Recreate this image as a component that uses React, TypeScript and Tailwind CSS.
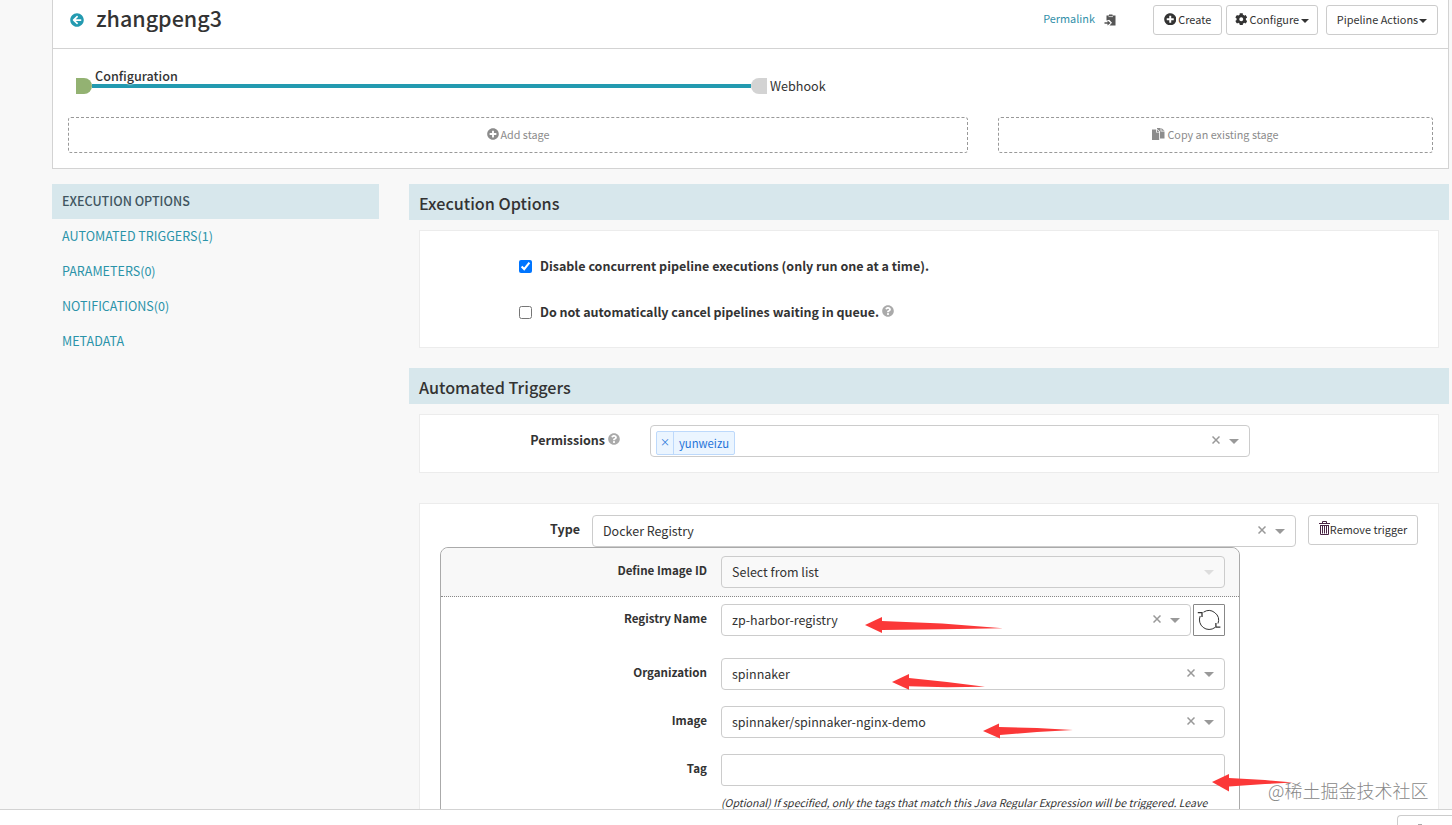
import { useState } from 'react';
import type { ReactNode } from 'react';
import { FaArrowCircleLeft, FaCog, FaPlusCircle, FaQuestionCircle } from 'react-icons/fa';

const navItems = [
  { key: 'concurrent', label: 'EXECUTION OPTIONS' },
  { key: 'triggers', label: 'AUTOMATED TRIGGERS', count: 1 },
  { key: 'parameters', label: 'PARAMETERS', count: 0 },
  { key: 'notifications', label: 'NOTIFICATIONS', count: 0 },
  { key: 'metadata', label: 'METADATA' },
];

function Caret() {
  return (
    <svg width="8" height="4" viewBox="0 0 8 4" className="mt-[3px] shrink-0" fill="currentColor">
      <path d="M0 0h8L4 4z" />
    </svg>
  );
}

function ClipboardIcon() {
  return (
    <svg width="12" height="12" viewBox="0 0 12 12" className="text-[#555]">
      <path d="M2.500 1.500H5V.5h3.500v1H11.500V11.500H5.500L8 8.800 5.200 5.800 2.500 6.500z" fill="currentColor" />
      <path d="M4.500 2.600h4.500" stroke="#fff" strokeWidth="0.700" />
      <path d="M0.500 8.300H3.500V6.500l3.100 2.500-3.100 2.500V9.700H0.500z" fill="currentColor" />
    </svg>
  );
}

function CopyIcon() {
  return (
    <svg width="13" height="12" viewBox="0 0 13 12" fill="currentColor">
      <path d="M0 1.500h4v3h3.200V12H0z" />
      <path d="M4.800 1.600 7.400 4h-2.600z" />
      <path d="M5 0h3.600v3.400h3.900V10.500H8V3.600L5 1z" />
      <path d="M9.400 0l3.100 2.700H9.400z" />
    </svg>
  );
}

function TrashIcon() {
  return (
    <svg width="11" height="14" viewBox="0 0 11 14" className="-mt-[2px] shrink-0" fill="none" stroke="#4a2545" strokeWidth="1">
      <path d="M0 2.500h11M3.500 2.500v-2h4v2M1.500 4v9.500h8V4M3.500 4.500v8M5.500 4.500v8M7.500 4.500v8M1 4.500h9" />
    </svg>
  );
}

function RefreshIcon() {
  return (
    <svg width="24" height="22" viewBox="0 0 24 22" className="shrink-0" fill="none" stroke="#333">
      <path d="M6.500 3.200A9.700 9.700 0 0 1 21 14.500M18 18.500A9.700 9.700 0 0 1 3.200 7" strokeWidth="1" />
      <path d="M0.800 3.600H5V8M23.400 18.200H18.900V14" strokeWidth="1.300" />
    </svg>
  );
}

function Button({ className, children }: { className: string; children: ReactNode }) {
  return (
    <button
      type="button"
      className={`flex h-[30px] items-center justify-center whitespace-nowrap rounded-[3px] border border-[#ccc] bg-white pb-[2px] text-[10.9px] text-[#333] ${className}`}
    >
      {children}
    </button>
  );
}

function SelectArrow({ disabled }: { disabled?: boolean }) {
  return (
    <svg width="10" height="5" viewBox="0 0 10 5" className={disabled ? 'text-[#ddd]' : 'text-[#999]'}>
      <path d="M0 0h10L5 5z" fill="currentColor" />
    </svg>
  );
}

function Select({ value, className, disabled, children }: { value?: string; className: string; disabled?: boolean; children?: ReactNode }) {
  return (
    <div
      className={`flex h-8 items-center rounded border border-[#ccc] pr-[10px] ${disabled ? 'bg-[#f9f9f9]' : 'bg-white'} ${className}`}
    >
      {value && <span className="flex-1 pl-[10px] text-[12.5px]">{value}</span>}
      {children}
      {!disabled && (
        <svg width="8" height="8" viewBox="0 0 8 8" className="-mt-[2px] mr-[9px] text-[#999]" stroke="currentColor" strokeWidth="1.500">
          <path d="M0.500 0.500l7 7M7.500 0.500l-7 7" />
        </svg>
      )}
      <SelectArrow disabled={disabled} />
    </div>
  );
}

function SectionHeading({ children }: { children: ReactNode }) {
  return <h4 className="flex h-9 items-center bg-[#d7e7ec] px-[10px] pt-px text-[16.2px] font-medium text-[#333]">{children}</h4>;
}

function FieldRow({ label, className, children }: { label: string; className?: string; children: ReactNode }) {
  return (
    <div className={`flex ${className ?? ''}`}>
      <label className="mr-[14px] w-[266px] pt-[5px] text-right text-[11.6px] font-bold leading-[18px]">{label}</label>
      {children}
    </div>
  );
}

export default function App() {
  const [disableConcurrent, setDisableConcurrent] = useState(true);
  const [keepWaiting, setKeepWaiting] = useState(false);

  return (
    <div className="relative flex h-[825px] w-[1452px] flex-col overflow-hidden bg-[#f8f8f8] font-['Noto_Sans_CJK_SC',sans-serif] text-[12.5px] leading-5 text-[#333]">
      <div className="h-[809px] shrink-0 overflow-hidden pl-[52px]">
        {/* Pipeline header */}
        <header className="h-[169px] w-[1397px] border-x border-b border-[#d3d3d3] bg-white">
          <div className="flex h-[49px] items-start border-b border-[#d3d3d3]">
            <FaArrowCircleLeft className="ml-[17px] mt-[13px] text-[14px] text-[#239ab0]" />
            <h3 className="ml-3 mt-[2px] text-[21.5px] font-medium leading-8">zhangpeng3</h3>
            <div className="ml-auto flex pr-[10px]">
              <a className="mt-2 text-[10.9px] text-[#318fa9]">Permalink</a>
              <span className="ml-[9px] mr-[37px] mt-[14px]">
                <ClipboardIcon />
              </span>
              <Button className="mt-[5px] w-[69px] gap-[2px]">
                <FaPlusCircle className="text-[12.5px]" /> Create
              </Button>
              <Button className="ml-1 mt-[5px] w-[92px] gap-[2px]">
                <FaCog className="text-[12.5px]" /> Configure <Caret />
              </Button>
              <Button className="ml-2 mt-[5px] w-[112px] gap-px">
                Pipeline Actions <Caret />
              </Button>
            </div>
          </div>

          {/* Stage graph */}
          <div className="relative flex h-[68px] items-center pl-[23px] pt-[5px]">
            <span className="h-4 w-4 rounded-r-lg bg-[#93b272]" />
            <span className="h-1 w-[659px] bg-[#239ab0]" />
            <span className="h-4 w-4 rounded-l-lg bg-[#d3d3d3]" />
            <span className="ml-[3px] text-[12.6px]">Webhook</span>
            <span className="absolute left-[42px] top-[17px] text-[12.6px] font-medium [text-shadow:0_0_2px_#fff,0_0_2px_#fff]">Configuration</span>
          </div>

          <div className="flex gap-[30px] px-[15px] text-[10.8px] text-[#8c8c8c]">
            <div className="flex h-9 w-[900px] items-center justify-center gap-[2px] rounded-[3px] border border-dashed border-[#999] pb-[2px]">
              <FaPlusCircle className="text-[12px]" /> Add stage
            </div>
            <div className="flex h-9 w-[435px] items-center justify-center gap-[2px] rounded-[3px] border border-dashed border-[#999] pb-[2px]">
              <CopyIcon /> Copy an existing stage
            </div>
          </div>
        </header>

        <div className="mt-[15px] flex gap-[30px]">
          <nav className="w-[327px]">
            {navItems.map((item, i) => (
              <a
                key={item.key}
                className={`flex h-[35px] items-center px-[10px] pb-[2px] text-[12.55px] ${i === 0 ? 'bg-[#d7e7ec] font-medium text-[#3f5560]' : 'text-[#2a93a9]'}`}
              >
                {item.label}
                {item.count !== undefined && `(${item.count})`}
              </a>
            ))}
          </nav>

          <main className="w-[1040px]">
            <SectionHeading>Execution Options</SectionHeading>
            <section className="mx-[10px] mt-[10px] flex h-[118px] flex-col gap-[26px] border border-[#ececec] bg-white pl-[99px] pt-[25px] font-bold">
              <label className="flex items-center">
                <input
                  type="checkbox"
                  className="mr-2 h-[13px] w-[13px]"
                  checked={disableConcurrent}
                  onChange={e => setDisableConcurrent(e.target.checked)}
                />
                Disable concurrent pipeline executions (only run one at a time).
              </label>
              <label className="flex items-center">
                <input
                  type="checkbox"
                  className="mr-2 h-[13px] w-[13px]"
                  checked={keepWaiting}
                  onChange={e => setKeepWaiting(e.target.checked)}
                />
                Do not automatically cancel pipelines waiting in queue.
                <FaQuestionCircle className="-mt-[2px] ml-[3px] text-[12px] text-[#aaa]" />
              </label>
            </section>

            <div className="h-5" />
            <SectionHeading>Automated Triggers</SectionHeading>
            <section className="mx-[10px] mt-[10px] flex h-[59px] border border-[#ececec] bg-white pt-[10px]">
              <label className="mr-[30px] flex h-[30px] w-[200px] items-center justify-end gap-[3px] font-bold">
                Permissions
                <FaQuestionCircle className="-mt-[2px] text-[12px] text-[#aaa]" />
              </label>
              <Select className="w-[600px]">
                <div className="flex-1 pl-[5px] pt-[3px]">
                  <span className="flex h-6 w-[79px] items-center rounded-[2px] border border-[#bdd9fb] bg-[#ebf5ff] text-[11.3px] text-[#1f74d9]">
                    <span className="flex h-full w-[17px] items-center justify-center border-r border-[#bdd9fb] pb-[2px] text-[10px]">×</span>
                    <span className="flex-1 text-center">yunweizu</span>
                  </span>
                </div>
              </Select>
            </section>

            <section className="mx-[10px] mt-[30px] h-[400px] border border-[#ececec] bg-white pt-[11px]">
              <div className="flex">
                <label className="mr-3 w-[160px] pt-1 text-right font-bold">Type</label>
                <Select value="Docker Registry" className="w-[704px]" />
                <Button className="ml-3 w-[110px]">
                  <TrashIcon />
                  Remove trigger
                </Button>
              </div>

              <div className="ml-5 h-[350px] w-[800px] rounded-lg border border-[#aaa]">
                <div className="h-[49px] rounded-t-lg border-b border-dotted border-[#888] bg-[#f8f8f8] pt-2">
                  <FieldRow label="Define Image ID">
                    <Select value="Select from list" className="w-[504px]" disabled />
                  </FieldRow>
                </div>
                <FieldRow label="Registry Name" className="mt-[7px]">
                  <Select value="zp-harbor-registry" className="w-[470px]" />
                  <button type="button" className="ml-[2px] flex h-8 w-8 items-center justify-center rounded-[1px] border border-[#888]">
                    <RefreshIcon />
                  </button>
                </FieldRow>
                <FieldRow label="Organization" className="mt-[22px]">
                  <Select value="spinnaker" className="w-[504px]" />
                </FieldRow>
                <FieldRow label="Image" className="mt-4">
                  <Select value="spinnaker/spinnaker-nginx-demo" className="w-[504px]" />
                </FieldRow>
                <FieldRow label="Tag" className="mt-4">
                  <input className="h-8 w-[504px] rounded-[3px] border border-[#ccc]" />
                </FieldRow>
                <p className="ml-[280px] mt-[7px] whitespace-nowrap text-[10.55px] italic">
                  (Optional) If specified, only the tags that match this Java Regular Expression will be triggered. Leave
                </p>
              </div>
            </section>
          </main>
        </div>
      </div>

      <footer className="flex h-4 shrink-0 justify-end overflow-hidden border-t border-[#d3d3d3] bg-white pt-[5px]">
        <div className="h-[30px] w-[55px] shrink-0 rounded-tl border-l border-t border-[#ccc] pl-5 pt-2">
          <span className="block h-px w-1 bg-[#aaa]" />
        </div>
      </footer>

      {/* Callout arrows */}
      <svg className="pointer-events-none absolute inset-0" width="1452" height="825" fill="#fb3838">
        <path d="M865 625l17-8v4l60 2.500 61 4.800-60 1-61 .700v3z" />
        <path d="M892 682l17-8v4l38 4 38 4.800-38 .500-38-1v3.500z" />
        <path d="M983 731l16-7.500v3.500l38 1 36 2-36 2-37 3v3.500z" />
        <path d="M1212 782l17-8v4l36 2 28 2.500-28 1.500-36 2.500v5z" />
      </svg>
      <span className="absolute left-[1268px] top-[778px] whitespace-nowrap text-[18px] font-light leading-6 text-[#888]">@稀土掘金技术社区</span>
    </div>
  );
}
